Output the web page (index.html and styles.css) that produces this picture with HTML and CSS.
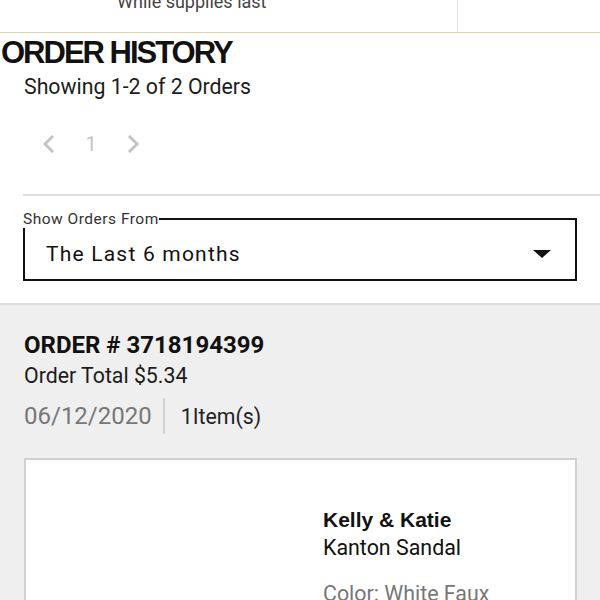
FILE: index.html
```html
<!DOCTYPE html>
<html lang="en">
<head>
    <meta charset="UTF-8">
    <meta name="viewport" content="width=device-width, initial-scale=1.0">
    <title>Order History</title>
    <link rel="stylesheet" href="styles.css">
</head>
<body>
    <div class="promo-bar">
        <div class="promo-cell">While supplies last</div>
        <div class="promo-side"></div>
    </div>

    <h1 class="page-title">ORDER HISTORY</h1>
    <p class="order-count">Showing 1-2 of 2 Orders</p>

    <div class="pager">
        <svg class="pager-arrow" viewBox="0 0 14 20" width="14" height="20">
            <path d="M11 2 L3 10 L11 18" fill="none" stroke="#c4c4c4" stroke-width="3"/>
        </svg>
        <span class="pager-num">1</span>
        <svg class="pager-arrow" viewBox="0 0 14 20" width="14" height="20">
            <path d="M3 2 L11 10 L3 18" fill="none" stroke="#c4c4c4" stroke-width="3"/>
        </svg>
    </div>

    <div class="rule"></div>

    <fieldset class="range-box">
        <legend>Show Orders From</legend>
        <div class="range-select">
            <span>The Last 6 months</span>
            <svg viewBox="0 0 18 9" width="18" height="9">
                <path d="M0 0 L18 0 L9 8 Z" fill="#111"/>
            </svg>
        </div>
    </fieldset>

    <div class="orders">
        <div class="order">
            <h2 class="order-num">ORDER # 3718194399</h2>
            <p class="order-total">Order Total $5.34</p>
            <div class="order-meta">
                <span class="order-date">06/12/2020</span>
                <span class="order-items">1Item(s)</span>
            </div>
            <div class="item-card">
                <div class="item-pic"></div>
                <div class="item-info">
                    <div class="item-brand">Kelly &amp; Katie</div>
                    <div class="item-name">Kanton Sandal</div>
                    <div class="item-color">Color: White Faux</div>
                </div>
            </div>
        </div>
    </div>
</body>
</html>
```

FILE: styles.css
```css
html, body {
    margin: 0;
    padding: 0;
    background-color: #fff;
}
body {
    font-family: Roboto, "Liberation Sans", sans-serif;
    color: #1c1c1c;
    overflow: hidden;
    height: 600px;
}
.promo-bar {
    display: flex;
    height: 32px;
    border-bottom: 1px solid #ddd3a8;
    overflow: hidden;
}
.promo-cell {
    width: 458px;
    border-right: 1px solid #e2e2e2;
    padding-left: 117px;
    box-sizing: border-box;
    font-size: 18px;
    line-height: 18px;
    margin-top: -7px;
    color: #444;
}
.promo-side {
    flex: 1;
}
.page-title {
    font-family: "Liberation Sans", Arial, sans-serif;
    font-weight: 700;
    font-size: 31px;
    line-height: 32px;
    letter-spacing: -2px;
    margin: 4px 0 0 1px;
    color: #111;
}
.order-count {
    margin: 5px 0 0 24px;
    font-size: 21.3px;
    line-height: 26px;
}
.pager {
    display: flex;
    align-items: center;
    gap: 28px;
    margin: 31px 0 0 42px;
    height: 26px;
}
.pager-num {
    font-size: 20px;
    color: #c4c4c4;
    width: 14px;
    text-align: center;
}
.rule {
    margin: 37px 0 0 23px;
    height: 2px;
    background-color: #dedede;
}
.range-box {
    margin: 14px 23px 0 23px;
    padding: 0 0 0 21px;
    border: 2px solid #111;
    height: 67px;
}
.range-box legend {
    padding: 0;
    margin-left: -23px;
    font-size: 15.5px;
    letter-spacing: 0.5px;
    color: #333;
}
.range-select {
    display: flex;
    justify-content: space-between;
    align-items: center;
    height: 52px;
    padding-right: 24px;
    font-size: 21px;
    letter-spacing: 1.2px;
    color: #111;
}
.orders {
    margin-top: 22px;
    border-top: 2px solid #dcdcdc;
    background-color: #efefef;
    padding: 25px 23px 0 24px;
    min-height: 300px;
}
.order-num {
    margin: 0;
    font-size: 24px;
    line-height: 30px;
    font-weight: 700;
    color: #111;
}
.order-total {
    margin: 3px 0 0 0;
    font-size: 21.3px;
    line-height: 26px;
}
.order-meta {
    display: flex;
    align-items: center;
    margin-top: 9px;
    height: 36px;
}
.order-date {
    font-size: 24px;
    color: #777;
    padding-right: 11px;
    border-right: 2px solid #d2d2d2;
    line-height: 36px;
}
.order-items {
    font-size: 21.3px;
    padding-left: 16px;
    color: #222;
}
.item-card {
    margin-top: 24px;
    background-color: #fff;
    border: 2px solid #d0d0d0;
    display: flex;
    height: 200px;
}
.item-pic {
    width: 297px;
}
.item-info {
    padding-top: 47px;
}
.item-brand {
    font-family: "Liberation Sans", Arial, sans-serif;
    font-weight: 700;
    font-size: 21px;
    line-height: 26px;
    color: #111;
}
.item-name {
    font-size: 21.4px;
    line-height: 30px;
    color: #111;
}
.item-color {
    margin-top: 18px;
    font-size: 21.4px;
    color: #777;
}
```
